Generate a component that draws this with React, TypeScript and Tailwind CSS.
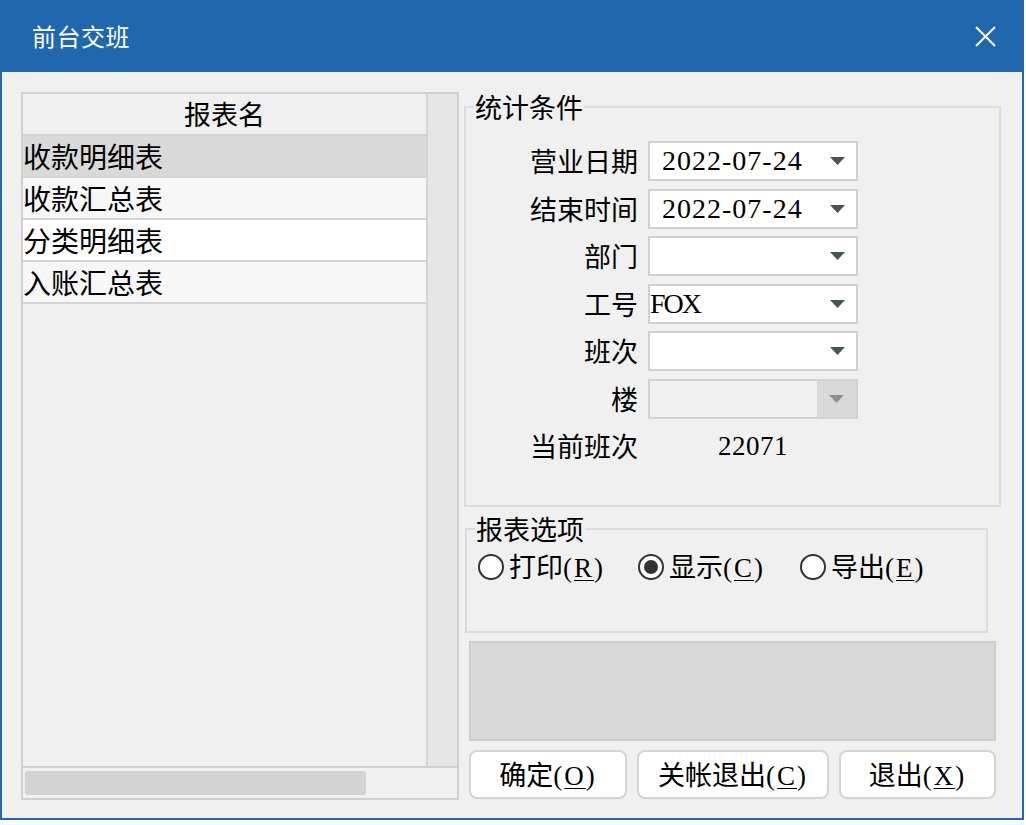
import React from "react";

const CJK = '"Noto Sans CJK SC", "Noto Sans", sans-serif';
const LAT = '"Liberation Serif", "Noto Sans CJK SC", serif';

function Arrow({ color = "#4b5550" }: { color?: string }) {
  return (
    <svg width="15" height="8" viewBox="0 0 15 8">
      <polygon points="0,0 15,0 7.5,8" fill={color} />
    </svg>
  );
}

function Combo({ value, pad = true, disabled = false }: { value?: string; pad?: boolean; disabled?: boolean }) {
  return (
    <div
      className={
        "ml-[10px] w-[210px] h-[40px] border-2 flex items-center " +
        (disabled ? "bg-[#f0f0f0] border-[#d2d2d2]" : "bg-white border-[#d0d0d0]")
      }
    >
      <div
        className={
          "flex-1 text-[28px] leading-[36px] text-black " +
          (pad ? "pl-[12px] tracking-[1px]" : "pl-0 tracking-[-2px]")
        }
        style={{ fontFamily: LAT }}
      >
        {value}
      </div>
      <div
        className={
          "h-full flex items-center justify-center " + (disabled ? "bg-[#d9d9d9] w-[39px]" : "w-[38px]")
        }
      >
        <Arrow color={disabled ? "#8d918f" : "#4b5550"} />
      </div>
    </div>
  );
}

function Row({ label, children }: { label: string; children?: React.ReactNode }) {
  return (
    <div className="flex items-center h-[40px]">
      <div className="w-[172px] text-right text-[27px] leading-[36px] text-black">{label}</div>
      {children}
    </div>
  );
}

function Hot({ pre, k }: { pre: string; k: string }) {
  return (
    <span>
      {pre}
      <span className="tracking-[2px]" style={{ fontFamily: LAT }}>
        (<span className="underline underline-offset-[3px] decoration-1">{k}</span>)
      </span>
    </span>
  );
}

function Radio({ checked, pre, k, w }: { checked?: boolean; pre: string; k: string; w: string }) {
  return (
    <div className={"flex items-center gap-[5px] " + w}>
      <div className="w-[26px] h-[26px] rounded-full border-2 border-[#333333] bg-white flex items-center justify-center">
        {checked && <div className="w-[14px] h-[14px] rounded-full bg-[#333333]" />}
      </div>
      <div className="text-[27px] leading-[36px] text-black">
        <Hot pre={pre} k={k} />
      </div>
    </div>
  );
}

export default function App() {
  const rows = [
    { t: "收款明细表", bg: "bg-[#d9d9d9]" },
    { t: "收款汇总表", bg: "bg-[#f7f7f7]" },
    { t: "分类明细表", bg: "bg-white" },
    { t: "入账汇总表", bg: "bg-[#f7f7f7]" },
  ];
  return (
    <div className="w-[1026px] h-[825px] bg-white overflow-hidden" style={{ fontFamily: CJK }}>
      <div className="w-[1024px] h-[820px] flex flex-col bg-[#2167ae]">
        {/* title bar */}
        <div className="h-[72px] flex items-center justify-between pl-[32px] pr-[28px]">
          <div className="text-white text-[24px] leading-[30px] tracking-[0.5px]">前台交班</div>
          <svg width="21" height="21" viewBox="0 0 21 21">
            <path d="M1 1 L20 20 M20 1 L1 20" stroke="white" strokeWidth="2" />
          </svg>
        </div>
        {/* client */}
        <div className="flex-1 mx-[2px] mb-[2px] bg-[#f0f0f0] flex items-start">
          {/* left list */}
          <div className="ml-[19px] mt-[20px] w-[438px] h-[708px] border-2 border-[#d0d0d0] flex flex-col">
            <div className="h-[674px] flex border-b-2 border-[#d0d0d0]">
              <div className="w-[405px] h-full border-r-2 border-[#d4d4d4] flex flex-col">
                <div className="h-[42px] border-b-2 border-[#d4d4d4] bg-[#f0f0f0] flex items-center justify-center text-[27px] leading-[36px] text-black">
                  报表名
                </div>
                {rows.map((r) => (
                  <div
                    key={r.t}
                    className={"h-[42px] border-b-2 border-[#d4d4d4] flex items-center text-[28px] leading-[38px] text-black " + r.bg}
                  >
                    {r.t}
                  </div>
                ))}
              </div>
              <div className="flex-1 h-full bg-[#e6e6e6]" />
            </div>
            <div className="flex-1 flex items-center pl-[2px]">
              <div className="w-[341px] h-[24px] bg-[#d3d3d3] rounded-[3px]" />
            </div>
          </div>

          {/* right column */}
          <div className="ml-[5px] mt-[19px] w-[537px] flex flex-col">
            <fieldset className="w-[537px] h-[416px] border-2 border-[#dcdcdc] pt-[18px]">
              <legend className="ml-[8px] px-[1px] text-[27px] leading-[32px] text-black">统计条件</legend>
              <div className="flex flex-col gap-[7.5px]">
                <Row label="营业日期">
                  <Combo value="2022-07-24" />
                </Row>
                <Row label="结束时间">
                  <Combo value="2022-07-24" />
                </Row>
                <Row label="部门">
                  <Combo />
                </Row>
                <Row label="工号">
                  <Combo value="FOX" pad={false} />
                </Row>
                <Row label="班次">
                  <Combo />
                </Row>
                <Row label="楼">
                  <Combo disabled />
                </Row>
                <Row label="当前班次">
                  <div
                    className="ml-[80px] text-[27px] leading-[36px] tracking-[0.5px] text-black"
                    style={{ fontFamily: LAT }}
                  >
                    22071
                  </div>
                </Row>
              </div>
            </fieldset>

            <fieldset className="mt-[6px] ml-[1px] w-[523px] h-[120px] border-2 border-[#dcdcdc] pt-[2px]">
              <legend className="ml-[8px] px-[1px] text-[27px] leading-[32px] text-black">报表选项</legend>
              <div className="flex items-center h-[40px] pl-[11px]">
                <Radio pre="打印" k="R" w="w-[160px]" />
                <Radio pre="显示" k="C" checked w="w-[162px]" />
                <Radio pre="导出" k="E" w="w-[160px]" />
              </div>
            </fieldset>

            <div className="mt-[8px] ml-[5px] w-[527px] h-[100px] bg-[#d9d9d9] border-2 border-[#cdcdcd]" />

            <div className="mt-[9px] ml-[5px] flex gap-[10px]">
              {[
                { p: "确定", k: "O", w: "w-[158px]" },
                { p: "关帐退出", k: "C", w: "w-[192px]" },
                { p: "退出", k: "X", w: "w-[157px]" },
              ].map((b) => (
                <div
                  key={b.p}
                  className={"h-[49px] bg-white border-2 border-[#d4d4d4] rounded-[8px] flex items-center justify-center text-[27px] leading-[36px] text-black " + b.w}
                >
                  <Hot pre={b.p} k={b.k} />
                </div>
              ))}
            </div>
          </div>
        </div>
      </div>
    </div>
  );
}
